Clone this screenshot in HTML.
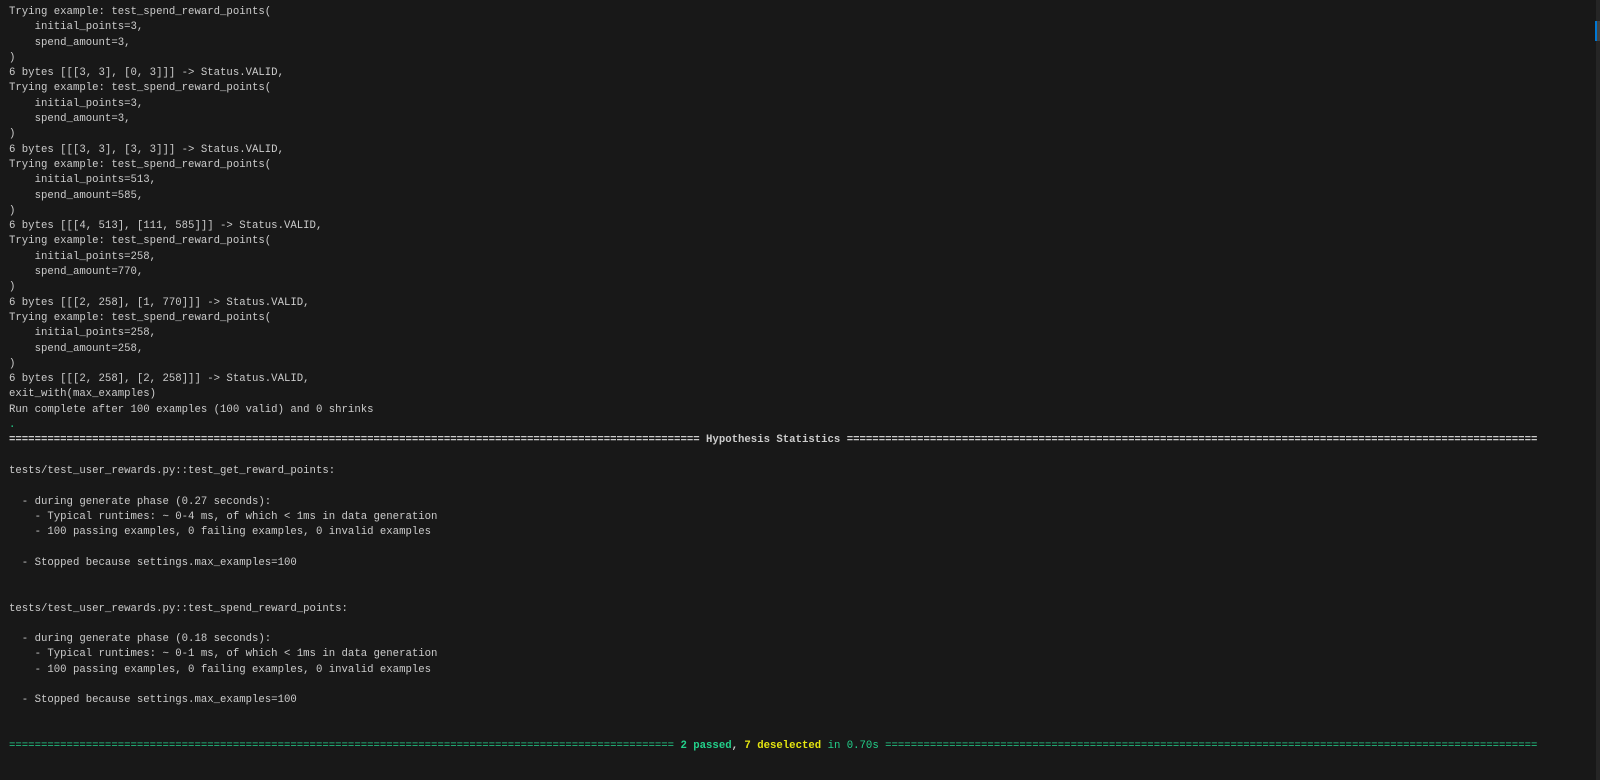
<!DOCTYPE html>
<html><head><style>
html,body{margin:0;padding:0;background:#181818;width:1600px;height:780px;overflow:hidden}
pre{margin:0;padding:5px 0 0 9px;font-family:"Liberation Mono",monospace;font-size:10.67px;line-height:15.3px;color:#cccccc;white-space:pre}
.b{font-weight:bold}
.g{color:#23d18b;font-weight:bold}
.gn{color:#23d18b}
.y{color:#e5e510;font-weight:bold}
.sb{position:absolute;right:0;top:0;width:4px;height:780px;background:#252525}
.mk{position:absolute;right:3px;top:21px;width:2px;height:20px;background:#0078d4}
.mk2{position:absolute;right:0;top:21px;width:3px;height:20px;background:#444}
</style></head><body>
<pre>Trying example: test_spend_reward_points(
    initial_points=3,
    spend_amount=3,
)
6 bytes [[[3, 3], [0, 3]]] -&gt; Status.VALID,
Trying example: test_spend_reward_points(
    initial_points=3,
    spend_amount=3,
)
6 bytes [[[3, 3], [3, 3]]] -&gt; Status.VALID,
Trying example: test_spend_reward_points(
    initial_points=513,
    spend_amount=585,
)
6 bytes [[[4, 513], [111, 585]]] -&gt; Status.VALID,
Trying example: test_spend_reward_points(
    initial_points=258,
    spend_amount=770,
)
6 bytes [[[2, 258], [1, 770]]] -&gt; Status.VALID,
Trying example: test_spend_reward_points(
    initial_points=258,
    spend_amount=258,
)
6 bytes [[[2, 258], [2, 258]]] -&gt; Status.VALID,
exit_with(max_examples)
Run complete after 100 examples (100 valid) and 0 shrinks
<span class="gn">.</span>
<span class="b">============================================================================================================ Hypothesis Statistics ============================================================================================================</span>

tests/test_user_rewards.py::test_get_reward_points:

  - during generate phase (0.27 seconds):
    - Typical runtimes: ~ 0-4 ms, of which &lt; 1ms in data generation
    - 100 passing examples, 0 failing examples, 0 invalid examples

  - Stopped because settings.max_examples=100


tests/test_user_rewards.py::test_spend_reward_points:

  - during generate phase (0.18 seconds):
    - Typical runtimes: ~ 0-1 ms, of which &lt; 1ms in data generation
    - 100 passing examples, 0 failing examples, 0 invalid examples

  - Stopped because settings.max_examples=100


<span class="gn">========================================================================================================</span><span class="g"> 2 passed</span><span class="b">, </span><span class="y">7 deselected</span><span class="gn"> in 0.70s ======================================================================================================</span></pre>
<div class="sb"></div><div class="mk2"></div><div class="mk"></div>
</body></html>
